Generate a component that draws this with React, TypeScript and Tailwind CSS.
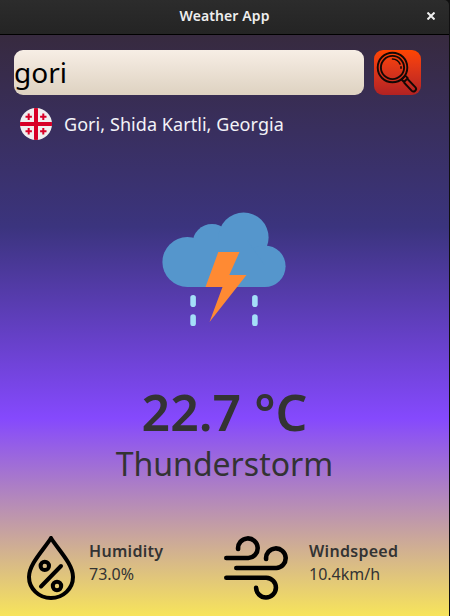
import React from "react";

function SearchIcon() {
  return (
    <svg width="47" height="45" viewBox="0 0 47 45" fill="none" stroke="#120805" strokeWidth="1.900">
      <circle cx="18.500" cy="17.500" r="14.800" />
      <circle cx="18.500" cy="17.500" r="11.600" />
      <path d="M18.500 9a8.600 8.600 0 0 1 7.500 5M27 16.800v1.400" strokeLinecap="round" strokeWidth="1.600" />
      <path d="M27.500 29.500l3.800-3.800 2.500 2.500-3.800 3.800zM33.500 29l8 8.300c2 2.300-1.500 5.600-3.700 3.600l-7.800-8.400" strokeLinejoin="round" />
    </svg>
  );
}

function GeorgiaFlag() {
  return (
    <svg width="32" height="32" viewBox="0 0 32 32">
      <circle cx="16" cy="16" r="16" fill="#f0f0f0" />
      <g fill="#d80027">
        <path d="M14 .13a16 16 0 0 1 4 0V14h13.870a16 16 0 0 1 0 4H18v13.870a16 16 0 0 1-4 0V18H.13a16 16 0 0 1 0-4H14z" />
        <path id="cross" d="M7.700 5.500h2v2.200h2.200v2H9.700v2.200h-2V9.700H5.500v-2h2.200z" />
        <use href="#cross" x="14.600" />
        <use href="#cross" y="14.600" />
        <use href="#cross" x="14.600" y="14.600" />
      </g>
    </svg>
  );
}

function ThunderstormIcon() {
  return (
    <svg width="124" height="114" viewBox="162 212 124 114">
      <g fill="#5596cc">
        <circle cx="187.300" cy="262" r="24.900" />
        <circle cx="212" cy="243.500" r="19.500" />
        <circle cx="243.600" cy="237.500" r="25" />
        <circle cx="264.800" cy="266.200" r="20.800" />
        <path d="M187 287V240h60l18 26v21z" />
      </g>
      <path fill="#ff8a33" d="M218.300 252h21.200l-10.200 23h17.200l-37 47 13-35h-17z" />
      <g fill="#a4dff8">
        <rect x="190.300" y="295" width="5.600" height="12" rx="2.800" />
        <rect x="190.300" y="314.200" width="5.600" height="12" rx="2.800" />
        <rect x="252.100" y="295" width="5.600" height="12" rx="2.800" />
        <rect x="252.100" y="314.200" width="5.600" height="12" rx="2.800" />
      </g>
    </svg>
  );
}

function HumidityIcon() {
  return (
    <svg width="48" height="64" viewBox="27 536 48 64" fill="none" stroke="#000" strokeWidth="4" strokeLinecap="round" strokeLinejoin="round">
      <path d="M51 538C44 549.500 29 564 29 577a22 21 0 0 0 44 0C73 564 58 549.500 51 538z" />
      <circle cx="44.800" cy="565.900" r="4.200" />
      <circle cx="57" cy="586" r="4.200" />
      <path d="M61 566L41 586.500" />
    </svg>
  );
}

function WindIcon() {
  return (
    <svg width="64" height="64" viewBox="224 536 64 64" fill="none" stroke="#000" strokeWidth="4.600" strokeLinecap="round">
      <path d="M226.300 558h22a9.800 9.800 0 1 0-10.200-9" />
      <path d="M236.300 568h40a9.800 9.800 0 1 0-10.200-9" />
      <path d="M226.300 577.700h40a9.900 9.900 0 1 1-10.200 10" />
    </svg>
  );
}

function Metric({ label, value }: { label: string; value: string }) {
  return (
    <div className="whitespace-nowrap pt-[4px] text-[#333]">
      <div className="text-[16px] font-semibold leading-[23px] tracking-[0.300px]">{label}</div>
      <div className="text-[16px] leading-[23px]">{value}</div>
    </div>
  );
}

export default function App() {
  return (
    <div className="flex h-[616px] w-[450px] flex-col overflow-hidden bg-[#101010] font-['Noto_Sans',sans-serif]">
      <header className="grid h-[35px] w-[449px] shrink-0 grid-cols-[1fr_auto_1fr] items-center rounded-tr-[5px] border-b border-black bg-linear-to-b from-[#2c2c2c] to-[#242424] text-[#eee]">
        <span />
        <h1 className="pb-[3px] text-[14px] font-semibold leading-[20px] tracking-[0.100px]">Weather App</h1>
        <svg className="mr-[14px] mb-[3px] justify-self-end" width="8" height="8" viewBox="0 0 8 8" stroke="#eee" strokeWidth="2">
          <path d="M.5.500l7 7M7.500.500l-7 7" />
        </svg>
      </header>
      <main className="flex w-[449px] grow flex-col bg-[linear-gradient(180deg,#372a3f_0%,#3b347e_33%,#8549fd_66%,#f7e45b_100%)]">
        <div className="flex gap-[10px] pl-[14px] pt-[15px]">
          <div className="h-[45px] w-[350px] rounded-[9px] bg-linear-to-b from-[#f7eee5] to-[#ded2c1] text-[28px] leading-[45px] text-black">
            gori
          </div>
          <button className="h-[45px] w-[47px] rounded-[9px] bg-linear-to-b from-[#ff4500] to-[#b22222]">
            <SearchIcon />
          </button>
        </div>
        <div className="mt-[13px] flex h-[32px] items-center gap-[12px] pl-[20px] text-[18px] tracking-[0.060px] text-[#f3f3f8]">
          <GeorgiaFlag />
          <span>Gori, Shida Kartli, Georgia</span>
        </div>
        <div className="mt-[72px] flex justify-center pr-[1px]">
          <ThunderstormIcon />
        </div>
        <div className="mt-[51px] whitespace-nowrap text-center text-[#333]">
          <div className="text-[50px] font-semibold leading-[70px]">22.7 °C</div>
          <div className="mt-[-5px] text-[32px] leading-[44px]">Thunderstorm</div>
        </div>
        <div className="mt-[50px] flex">
          <div className="flex w-[224px] gap-[14px] pl-[27px]">
            <HumidityIcon />
            <Metric label="Humidity" value="73.0%" />
          </div>
          <div className="flex gap-[21px]">
            <WindIcon />
            <Metric label="Windspeed" value="10.4km/h" />
          </div>
        </div>
      </main>
    </div>
  );
}
